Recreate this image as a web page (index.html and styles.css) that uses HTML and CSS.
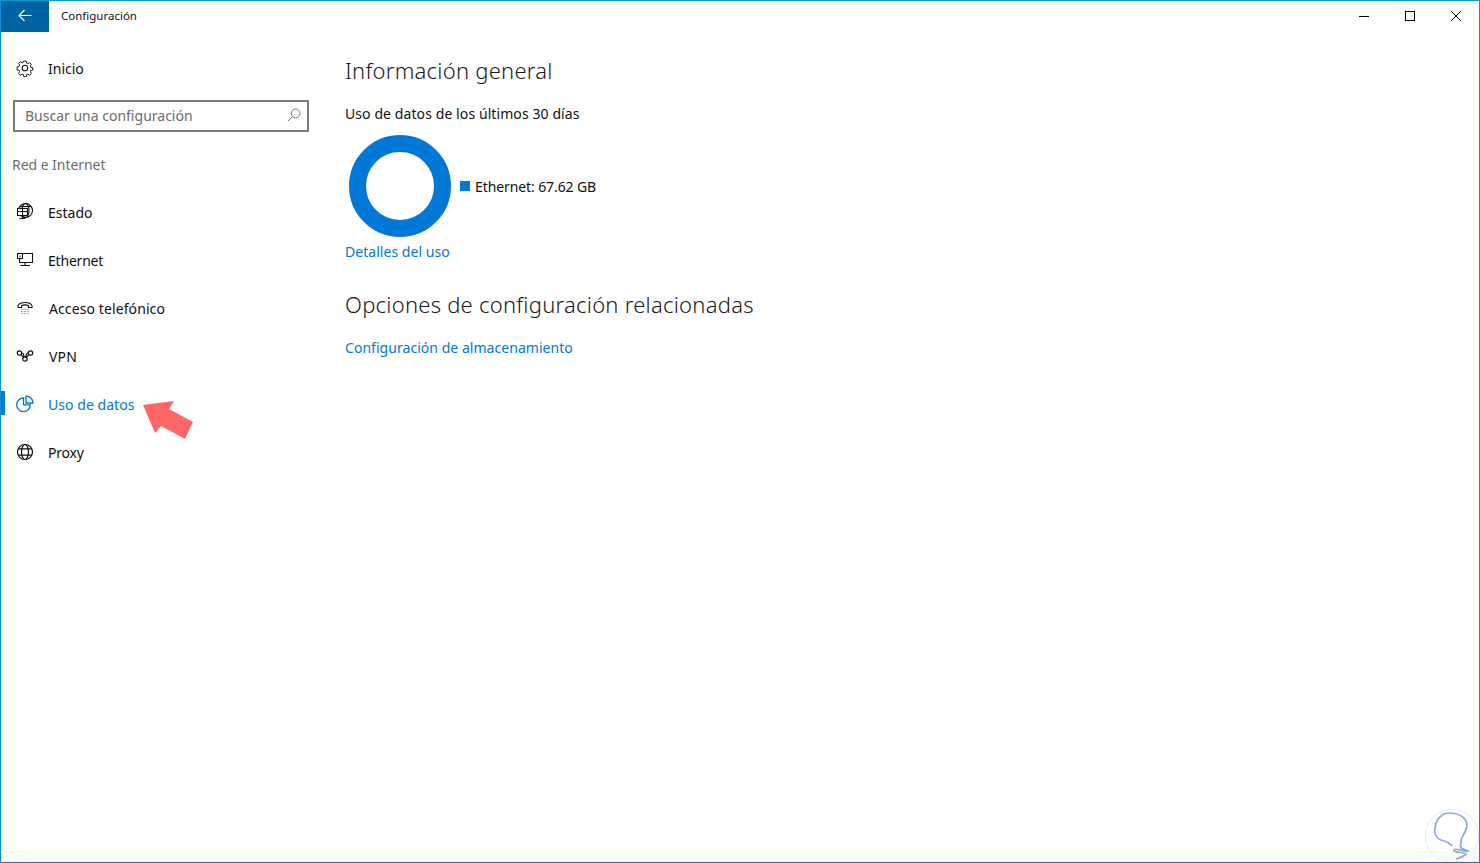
FILE: index.html
```html
<!DOCTYPE html>
<html>
	<head>
		<title>Configuración</title>
		<link rel="stylesheet" href="styles.css">
	</head>
	<body>
		<div class="window">
			<div class="titlebar">
				<div class="back-btn">
					<svg width="14" height="14" viewBox="0 0 14 14" fill="none" stroke="#fff" stroke-width="1.1"><path d="M1 6.500H13.500M6.500 1L1 6.500l5.500 5.500"/></svg>
				</div>
				<div class="app-title">Configuración</div>
				<div class="win-btns">
					<div class="win-btn"><svg width="12" height="12" viewBox="0 0 12 12" stroke="#000" fill="none"><path d="M1 6.500H11"/></svg></div>
					<div class="win-btn"><svg width="12" height="12" viewBox="0 0 12 12" stroke="#000" fill="none"><rect x="1.500" y="1.500" width="9" height="9"/></svg></div>
					<div class="win-btn"><svg width="12" height="12" viewBox="0 0 12 12" stroke="#000" fill="none"><path d="M1 1L11 11M11 1L1 11"/></svg></div>
				</div>
			</div>
			<div class="main">
				<div class="sidebar">
					<div class="nav-item home">
						<svg class="nav-icon" width="18" height="18" viewBox="0 0 18 18" fill="none" stroke="#111" stroke-width="1.100"><circle cx="9" cy="9" r="2.800"/><path d="M7.600 1.200h2.800l.4 2.200 1.500.7 1.900-1.200 2 2-1.200 1.900.6 1.500 2.200.4v2.600l-2.200.4-.6 1.500 1.200 1.900-2 2-1.900-1.200-1.500.6-.4 2.200H7.600l-.4-2.200-1.500-.6-1.900 1.200-2-2 1.200-1.900-.6-1.500-2.200-.4V7.700l2.200-.4.6-1.500-1.200-1.900 2-2 1.900 1.200 1.500-.7z" transform="translate(1 1) scale(.89)"/></svg>
						<span>Inicio</span>
					</div>
					<div class="search">
						<span>Buscar una configuración</span>
						<svg width="14" height="14" viewBox="0 0 14 14" fill="none" stroke="#777" stroke-width="1"><circle cx="8.600" cy="5.400" r="4.400"/><path d="M5.500 8.500L.8 13.200"/></svg>
					</div>
					<div class="group-label">Red e Internet</div>
					<div class="nav-item">
						<svg class="nav-icon" width="18" height="18" viewBox="0 0 18 18" fill="none" stroke="#111" stroke-width="1.100"><circle cx="9.500" cy="7.500" r="7"/><ellipse cx="9.500" cy="7.500" rx="3.500" ry="7"/><path d="M3.500 3.500h12"/><rect x="1.500" y="5.500" width="10" height="7" fill="#fff"/><path d="M1.500 8.500h10M6.500 5.500v7M6.500 12.500v3M3.500 15.500h6"/></svg>
						<span>Estado</span>
					</div>
					<div class="nav-item">
						<svg class="nav-icon" width="18" height="18" viewBox="0 0 18 18" fill="none" stroke="#111" stroke-width="1.100"><path d="M6.500 2.500H16.500V11.500H3.500"/><rect x="1.500" y="2.500" width="5" height="5"/><path d="M3.500 7.500v4M4 4.500v1.500M9 11.500v3M4.500 14.500h9.500"/></svg>
						<span class="eth">Ethernet</span>
					</div>
					<div class="nav-item phone">
						<svg class="nav-icon" width="18" height="18" viewBox="0 0 18 18" fill="none" stroke="#111" stroke-width="1.100"><path d="M2 8.500V6.500C3.500 4 6 3.500 9 3.500s5.500.5 7 3v2H12.500V6.500C11 6 7 6 5.500 6.500V8.500z"/><path d="M5.500 10.500h1M8.500 10.500h1M11.500 10.500h1M5.500 12.500h1M8.500 12.500h1M11.500 12.500h1M5.500 14.500h1M8.500 14.500h1M11.500 14.500h1" stroke="#555"/></svg>
						<span>Acceso telefónico</span>
					</div>
					<div class="nav-item vpn">
						<svg class="nav-icon" width="18" height="18" viewBox="0 0 18 18" fill="none" stroke="#111" stroke-width="1.200"><circle cx="3.500" cy="6" r="2.200"/><circle cx="14.500" cy="6" r="2.200"/><circle cx="9" cy="12" r="2.200"/><path d="M5.700 6C8 6 8 8 8 10M12.300 6C10 6 10 8 10 10M5 7.500C6 9 7 9.500 7.500 10M13 7.500C12 9 11 9.500 10.500 10"/></svg>
						<span>VPN</span>
					</div>
					<div class="nav-item active">
						<div class="active-mark"></div>
						<svg class="nav-icon" width="18" height="18" viewBox="0 0 18 18" fill="none" stroke="#0078d7" stroke-width="1.300"><path d="M7.500 3A6.800 6.800 0 1 0 14.300 9.800H7.500z"/><path d="M10 1.200H10.500a6.300 6.300 0 0 1 6.300 6.300V8H10z"/></svg>
						<span class="usage">Uso de datos</span>
						<svg class="arrow" width="52" height="40" viewBox="0 0 52 40"><path d="M1 5L32 1 27 9 51 22 43 39 19 26 13 33z" fill="#ff6767"/></svg>
					</div>
					<div class="nav-item">
						<svg class="nav-icon" width="18" height="18" viewBox="0 0 18 18" fill="none" stroke="#111" stroke-width="1.200"><circle cx="9" cy="9" r="7.500"/><ellipse cx="9" cy="9" rx="3.500" ry="7.500"/><path d="M2.200 5.800h13.600M2.200 12.200h13.600"/></svg>
						<span class="proxy">Proxy</span>
					</div>
				</div>
				<div class="content">
					<h2 class="heading">Información general</h2>
					<div class="usage-label">Uso de datos de los últimos 30 días</div>
					<div class="chart-row">
						<div class="donut"></div>
						<div class="legend"><i class="legend-box"></i>Ethernet: 67.62 GB</div>
					</div>
					<a class="link details">Detalles del uso</a>
					<h2 class="heading related">Opciones de configuración relacionadas</h2>
					<a class="link">Configuración de almacenamiento</a>
				</div>
			</div>
			<svg class="watermark" width="56" height="56" viewBox="0 0 56 56" fill="none">
				<circle cx="29" cy="30" r="26.500" stroke="#e6edf5" stroke-width="1"/>
				<path d="M29 40C26 36 22 35 18 34 13 32 11 27 12 22 13 13 19 7 26 7 36 7 44 12 44 19 44 26 38 30 38 36 37 40 38 42 38 42L45 45C42 47 33 41 31 44 30 47 43 46 43 48 42 50 36 52 33 53" stroke="#8aa9d6" stroke-width="1.700"/>
			</svg>
		</div>
	</body>
</html>
```

FILE: styles.css
```css
* {
	box-sizing: border-box;
}

html,
body {
	margin: 0;
	padding: 0;
	height: 100%;
	overflow: hidden;
}

body {
	font-family: "Noto Sans", "Open Sans", sans-serif;
	font-size: 14px;
	color: #111;
	background: #fff;
}

.window {
	position: relative;
	height: 863px;
	border: 1px solid #0a8fd8;
	border-top-color: #0a9ad6;
	border-bottom-color: #0a78c8;
	overflow: hidden;
}

.titlebar {
	display: flex;
	align-items: center;
	height: 31px;
}

.back-btn {
	display: flex;
	align-items: center;
	justify-content: center;
	width: 48px;
	height: 31px;
	padding-bottom: 2px;
	background: #0063a1;
}

.app-title {
	margin-left: 12px;
	padding-bottom: 2px;
	font-size: 11.500px;
	color: #111;
}

.win-btns {
	display: flex;
	margin-left: auto;
}

.win-btn {
	display: flex;
	align-items: center;
	justify-content: center;
	width: 46px;
	height: 31px;
	padding-bottom: 2px;
}

.main {
	display: flex;
}

.sidebar {
	width: 344px;
	padding-top: 12px;
	flex: none;
}

.nav-item {
	position: relative;
	display: flex;
	align-items: center;
	height: 48px;
	padding-left: 15px;
	font-size: 14px;
}

.nav-item span {
	margin-left: 14px;
}

.nav-icon {
	flex: none;
}

.nav-item.phone span {
	margin-left: 15px;
	letter-spacing: 0.1px;
}

.nav-item.vpn span {
	margin-left: 15px;
	letter-spacing: 0.15px;
}

.nav-item .eth {
	letter-spacing: -0.2px;
}

.nav-item .proxy {
	letter-spacing: -0.2px;
}

.nav-item .usage {
	letter-spacing: 0.05px;
}

.nav-item.active {
	color: #0078d7;
}

.active-mark {
	position: absolute;
	left: 0;
	top: 11px;
	width: 4px;
	height: 24px;
	background: #0078d7;
}

.arrow {
	position: absolute;
	left: 141px;
	top: 20px;
}

.search {
	display: flex;
	align-items: center;
	justify-content: space-between;
	width: 296px;
	height: 32px;
	margin: 8px 0 0 12px;
	padding: 0 6px 2px 10px;
	border: 2px solid #7a7a7a;
	color: #6d6d6d;
}

.group-label {
	margin: 23px 0 0 11px;
	height: 20px;
	line-height: 20px;
	color: #6d6d6d;
	letter-spacing: -0.05px;
}

.group-label + .nav-item {
	margin-top: 13px;
}

.content {
	padding: 22px 0 0 0;
}

.heading {
	margin: 0;
	font-size: 22px;
	font-weight: 300;
	line-height: 32px;
	color: #1a1a1a;
	letter-spacing: 0.25px;
}

.usage-label {
	margin-top: 18px;
	line-height: 20px;
	letter-spacing: 0.09px;
}

.chart-row {
	display: flex;
	align-items: center;
	margin: 11px 0 0 4px;
}

.donut {
	width: 102px;
	height: 102px;
	border: 17px solid #0078d7;
	border-radius: 50%;
}

.legend {
	display: flex;
	align-items: center;
	margin-left: 9px;
	letter-spacing: -0.1px;
}

.legend-box {
	width: 10px;
	height: 10px;
	margin-right: 5px;
	background: #0078d7;
}

.link {
	display: block;
	line-height: 20px;
	color: #0078d7;
	letter-spacing: 0.04px;
}

.details {
	margin-top: 5px;
}

.related {
	margin-top: 26px;
}

.related + .link {
	margin-top: 18px;
}

.watermark {
	position: absolute;
	right: 0;
	bottom: 0;
}
```
